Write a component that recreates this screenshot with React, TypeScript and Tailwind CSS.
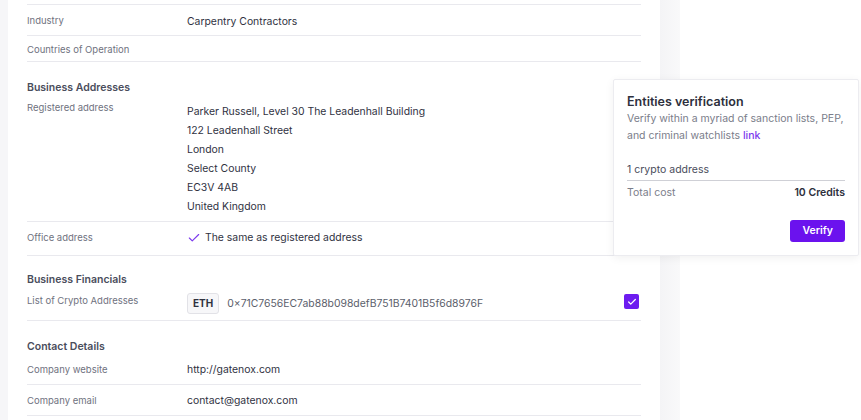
import { Check } from "lucide-react";

const font = { fontFamily: "Inter, 'Noto Sans', sans-serif" };

function Row({ label, children, h, pt = "" }: { label: string; children?: React.ReactNode; h: string; pt?: string }) {
  return (
    <div className={`flex items-center ${h} ${pt} border-b border-[#e9e9ee]`}>
      <div className="w-[160px] shrink-0 text-[9.5px] text-[#6f7280]">{label}</div>
      <div className="flex-1 text-[10.4px] text-[#30323f]">{children}</div>
    </div>
  );
}

function Heading({ children, pt }: { children: React.ReactNode; pt: string }) {
  return <div className={`${pt} text-[10.5px] font-semibold text-[#4a4d5c]`}>{children}</div>;
}

export default function App() {
  const address = [
    "Parker Russell, Level 30 The Leadenhall Building",
    "122 Leadenhall Street",
    "London",
    "Select County",
    "EC3V 4AB",
    "United Kingdom",
  ];

  return (
    <div className="relative flex w-[861px] h-[420px] overflow-hidden bg-[#f6f6f8] pl-[8px]" style={font}>
      <div className="w-[652px] shrink-0 bg-white px-[19px] pt-[4px]">
        <div className="border-t border-[#e9e9ee]" />
        <Row label="Industry" h="h-[31px]" pt="pt-[3px]">Carpentry Contractors</Row>
        <Row label="Countries of Operation" h="h-[26px]" pt="pt-[3px]" />

        <Heading pt="pt-[18px]">Business Addresses</Heading>
        <div className="flex border-b border-[#e9e9ee] pt-[4px] pb-[5px]">
          <div className="w-[160px] shrink-0 pt-[1px] text-[9.5px] text-[#6f7280]">Registered address</div>
          <div className="flex-1 pt-[2px] text-[10.4px] leading-[19px] text-[#30323f]">
            {address.map((l) => (
              <div key={l}>{l}</div>
            ))}
          </div>
        </div>
        <Row label="Office address" h="h-[34px]">
          <span className="flex items-center gap-[4px]">
            <Check className="h-[14px] w-[14px] text-[#7c3aed]" strokeWidth={2} />
            The same as registered address
          </span>
        </Row>

        <Heading pt="pt-[16px]">Business Financials</Heading>
        <div className="flex h-[33px] items-center border-b border-[#e9e9ee]">
          <div className="w-[160px] shrink-0 -mt-[4px] text-[9.5px] text-[#6f7280]">List of Crypto Addresses</div>
          <div className="flex flex-1 items-center gap-[8px]">
            <span className="rounded-[3px] border border-[#e2e2e7] bg-[#f7f7f9] px-[5px] py-[2px] text-[10px] font-bold text-[#30323f]">ETH</span>
            <span className="text-[10.4px] text-[#5b5e6b]">0×71C7656EC7ab88b098defB751B7401B5f6d8976F</span>
          </div>
          <div className="-mt-[4px] mr-[2px] flex h-[15px] w-[15px] items-center justify-center rounded-[2px] bg-[#6d1cf0]">
            <Check className="h-[10px] w-[10px] text-white" strokeWidth={3} />
          </div>
        </div>

        <Heading pt="pt-[18px]">Contact Details</Heading>
        <Row label="Company website" h="h-[31px]" pt="pt-[2px]">http://gatenox.com</Row>
        <Row label="Company email" h="h-[31px]" pt="pt-[1px]">contact@gatenox.com</Row>
      </div>

      <div className="w-[20px] shrink-0 bg-gradient-to-r from-[#f4f4f6] to-[#f9f9fa]" />
      <div className="flex-1 bg-white" />

      <div className="absolute left-[613px] top-[79px] w-[246px] h-[177px] rounded-[2px] border border-[#ececf0] bg-white px-[13px] pt-[13px] shadow-[0_2px_10px_rgba(0,0,0,0.06)]">
        <div className="text-[12.5px] font-semibold leading-[17px] text-[#2d2f3c]">Entities verification</div>
        <div className="text-[10.5px] leading-[17px] text-[#7a7d8a]">
          Verify within a myriad of sanction lists, PEP, and criminal watchlists <span className="font-medium text-[#7c3aed]">link</span>
        </div>
        <div className="mt-[18px] border-b border-[#cfd0d6] pb-[3px] text-[10.5px] leading-[15px] text-[#4a4d5c]">1 crypto address</div>
        <div className="mt-[4px] flex items-center justify-between text-[10.5px] leading-[15px]">
          <span className="text-[#7a7d8a]">Total cost</span>
          <span className="font-semibold text-[#2d2f3c]">10 Credits</span>
        </div>
        <div className="mt-[20px] flex justify-end">
          <button className="h-[22px] rounded-[3px] bg-[#6b12ee] px-[12px] text-[10.5px] font-semibold text-white">Verify</button>
        </div>
      </div>
    </div>
  );
}
